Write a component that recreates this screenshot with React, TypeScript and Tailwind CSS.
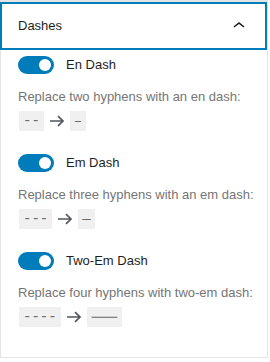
import React from "react";

type Dash = {
    label: string;
    help: string;
    from: string;
    to: string;
};

const dashes: Dash[] = [
    { label: "En Dash", help: "Replace two hyphens with an en dash:", from: "--", to: "–" },
    { label: "Em Dash", help: "Replace three hyphens with an em dash:", from: "---", to: "—" },
    { label: "Two-Em Dash", help: "Replace four hyphens with two-em dash:", from: "----", to: "⸺" },
];

function Toggle() {
    return (
        <span className="flex items-center justify-end w-9 h-[18px] px-[3px] rounded-full bg-[#007cba]">
            <span className="block w-3 h-3 rounded-full bg-white" />
        </span>
    );
}

function Code({ children }: { children: React.ReactNode }) {
    return (
        <code className="mx-px px-1 py-[2px] bg-[#f0f0f0] text-[14px] leading-4 text-[#6a6a6a] font-['Liberation_Mono',monospace]">
            {children}
        </code>
    );
}

function Arrow() {
    return (
        <svg width="16" height="12" viewBox="0 0 16 12" className="mx-1 text-[#50575e]" fill="none">
            <path d="M1 6h13M9 1.2 14 6l-5 4.8" stroke="currentColor" strokeWidth="1.7" />
        </svg>
    );
}

export default function App() {
    return (
        <div className="w-[270px] h-[362px] bg-white font-['Liberation_Sans',sans-serif]">
            <div className="w-[268px] h-[358px] border border-t-2 border-[#e4e4e4] flex flex-col">
                {/* HEADER */}
                <button className="-ml-px w-[267px] h-12 shrink-0 flex items-center justify-between pl-[18px] pr-4 shadow-[inset_0_0_0_2px_#007cba] text-[13px] font-medium text-[#1e1e1e]">
                    <span>Dashes</span>
                    <svg width="24" height="24" viewBox="0 0 24 24" className="fill-[#1e1e1e]">
                        <path d="M6.5 12.4 12 8l5.5 4.4-.9 1.2L12 10l-4.6 3.6-.9-1.2z" />
                    </svg>
                </button>

                {/* BODY */}
                <div className="flex flex-col pl-[17px] pt-[6px]">
                    {dashes.map((d) => (
                        <div key={d.label} className="flex flex-col mb-[23px]">
                            <div className="flex items-center gap-3 h-[18px]">
                                <Toggle />
                                <span className="text-[13px] text-[#1e1e1e]">{d.label}</span>
                            </div>
                            <p className="mt-[15px] text-[13px] leading-4 text-[#757575]">{d.help}</p>
                            <div className="mt-[6px] h-5 flex items-center">
                                <Code>{d.from}</Code>
                                <Arrow />
                                <Code>{d.to}</Code>
                            </div>
                        </div>
                    ))}
                </div>
            </div>
        </div>
    );
}
